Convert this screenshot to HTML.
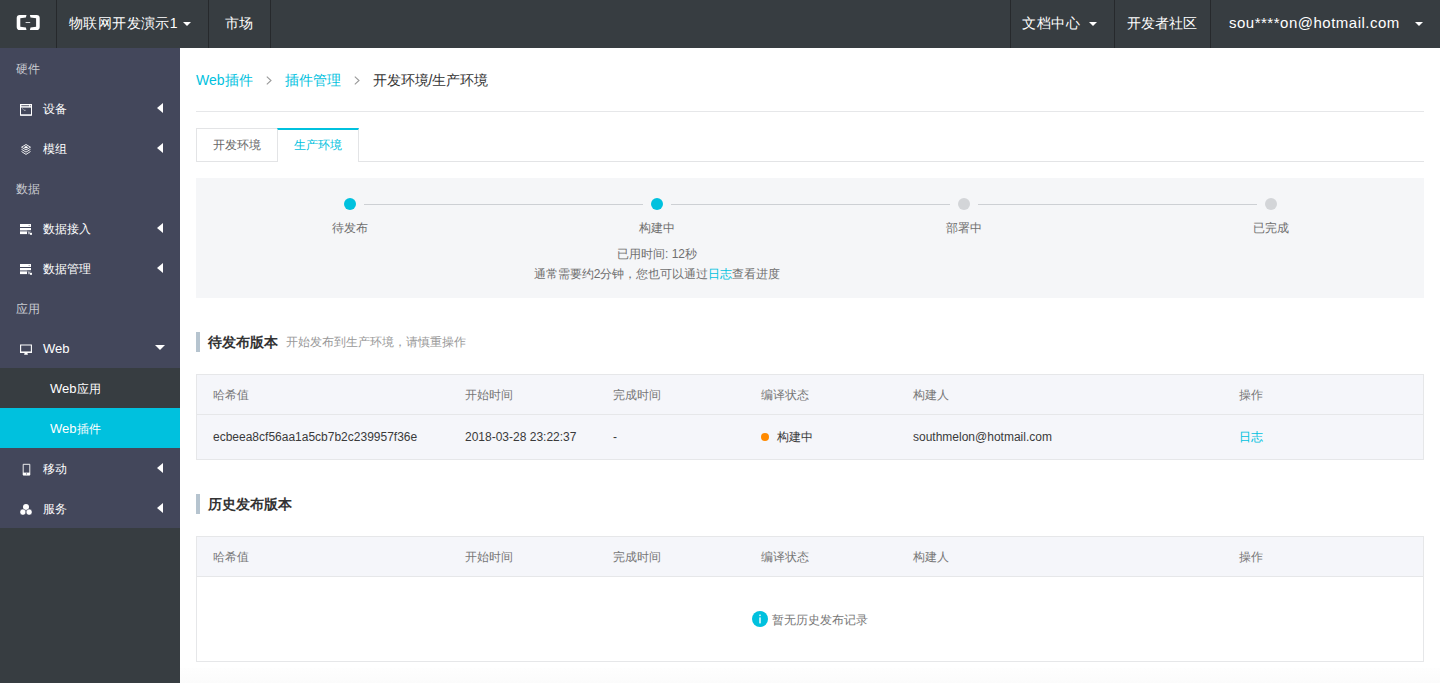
<!DOCTYPE html>
<html><head><meta charset="utf-8">
<style>
*{margin:0;padding:0;box-sizing:border-box}
html,body{width:1440px;height:683px;overflow:hidden;background:#fff;font-family:"Liberation Sans",sans-serif;font-size:12px;color:#333}
.ab{position:absolute}
.top{position:absolute;left:0;top:0;width:1440px;height:48px;background:#373d41;color:#fff}
.top .it{position:absolute;top:0;height:48px;line-height:47px;font-size:14px;color:#fff;white-space:nowrap}
.top .sep{position:absolute;top:0;width:1px;height:48px;background:#26292c}
.caret{position:absolute;top:22px;width:0;height:0;border-left:4px solid transparent;border-right:4px solid transparent;border-top:4px solid #fff}
.side{position:absolute;left:0;top:48px;width:180px;height:635px;background:#373d41}
.sbg{position:absolute;left:0;top:0;width:180px;height:480px;background:#43475b}
.lab{position:absolute;left:16px;height:40px;line-height:42px;font-size:12px;color:#c9cbd1}
.mi{position:absolute;left:0;width:180px;height:40px;line-height:42px;font-size:12px;color:#fff}
.mi .tx{position:absolute;left:43px;top:0;white-space:nowrap}
.mi svg{position:absolute}
.lc{position:absolute;left:157px;top:15px;width:0;height:0;border-top:5px solid transparent;border-bottom:5px solid transparent;border-right:6px solid #fff}
.main{position:absolute;left:180px;top:48px;width:1260px;height:635px}
.a{color:#00c1de}
.gt{display:inline-block;margin:0 13px 0 13px;vertical-align:0px}
.tab{position:absolute;top:80px;height:34px;line-height:33px;text-align:center;font-size:12px;background:#fff}
.steps{position:absolute;left:16px;top:130px;width:1228px;height:120px;background:#f5f6f8}
.steps .ln{position:absolute;top:26px;height:1px;background:#cdd0d4}
.steps .dot{position:absolute;top:20px;width:12px;height:12px;border-radius:50%;background:#d3d5d8}
.steps .dot.on{background:#00c1de}
.steps .sl{position:absolute;top:40px;width:200px;text-align:center;font-size:12px;color:#6f6f6f;line-height:20px}
.steps .sd{position:absolute;width:800px;text-align:center;font-size:12px;color:#6f6f6f;line-height:20px}
.st{position:absolute;left:16px;height:20px;border-left:4px solid #b6c4cf}
.st b{position:absolute;left:8px;top:0;line-height:21px;font-size:14px;color:#333;white-space:nowrap}
.st span{position:absolute;top:0;line-height:21px;font-size:12px;color:#999;white-space:nowrap}
.tbl{position:absolute;left:16px;width:1228px;border:1px solid #e6e7e9}
.th{position:relative;height:40px;background:#f5f6fa;border-bottom:1px solid #e6e7e9}
.th span{position:absolute;top:0;line-height:41px;font-size:12px;color:#777;white-space:nowrap}
.tr{position:relative;background:#f5f6fa}
.tr span{position:absolute;top:0;line-height:44px;font-size:12px;color:#3a3a3a;white-space:nowrap}
.tr span.a{color:#00c1de}
.od{display:inline-block;width:8px;height:8px;border-radius:50%;background:#ff8a00;margin-right:8px;vertical-align:middle;position:relative;top:-1px}
.empty{position:relative;height:84px;background:#fff}
</style></head><body>
<div class="top">
  <svg class="ab" style="left:16px;top:15px" width="25" height="15" viewBox="-0.7 0 25 15">
    <path fill="#fff" d="M9.8 0H3.1Q0 0 0 3.1V11.9Q0 15 3.1 15H9.8L9.2 12.6L3.6 11.7V3.3L9.2 2.4Z"/>
    <path fill="#fff" d="M13.2 0H19.9Q23 0 23 3.1V11.9Q23 15 19.9 15H13.2L13.8 12.6L19.4 11.7V3.3L13.8 2.4Z"/>
    <rect x="8.9" y="7" width="4.6" height="1" fill="#d5d7d9"/>
  </svg>
  <div class="sep" style="left:56px"></div>
  <div class="it" style="left:69px;letter-spacing:0.4px">物联网开发演示1</div><span class="caret" style="left:183px"></span>
  <div class="sep" style="left:208px"></div>
  <div class="it" style="left:225px">市场</div>
  <div class="sep" style="left:270px"></div>
  <div class="sep" style="left:1010px"></div>
  <div class="it" style="left:1022px;letter-spacing:0.5px">文档中心</div><span class="caret" style="left:1089px"></span>
  <div class="sep" style="left:1114px"></div>
  <div class="it" style="left:1127px">开发者社区</div>
  <div class="sep" style="left:1210px"></div>
  <div class="it" style="left:1229px;font-size:15px;letter-spacing:0.5px;line-height:45px">sou****on@hotmail.com</div>
  <span class="caret" style="left:1415px"></span>
</div>
<div class="side">
  <div class="sbg"></div>
  <div class="lab" style="top:0">硬件</div>
  <div class="mi" style="top:40px">
    <svg style="left:20px;top:16px" width="12" height="12" viewBox="0 0 12 12">
      <path d="M0.5 0.5H11.5V11.5H0.5Z" fill="none" stroke="#fff" stroke-width="1"/>
      <rect x="0" y="0" width="12" height="3.6" fill="#fff"/>
      <rect x="1.3" y="1.3" width="7.8" height="0.9" fill="#43475b"/>
      <rect x="9.9" y="1.3" width="0.9" height="0.9" fill="#43475b"/>
      <rect x="1" y="10" width="10" height="1.5" fill="#c8cad2"/>
      <path d="M2.3 4.6L3.5 5.5 M3.9 6.3H5.6" stroke="#d0d2d8" stroke-width="0.8"/>
    </svg>
    <span class="tx">设备</span><span class="lc"></span></div>
  <div class="mi" style="top:80px">
    <svg style="left:21px;top:16px" width="10" height="11" viewBox="0 0 10 11">
      <path d="M5 0.5L9.5 3.2L5 5.9L0.5 3.2Z" fill="none" stroke="#fff" stroke-width="0.9"/>
      <path d="M5 1.9L7.4 3.2L5 4.5L2.6 3.2Z" fill="#fff"/>
      <path d="M0.5 5.3L5 8.1L9.5 5.3 M0.5 7.5L5 10.4L9.5 7.5" fill="none" stroke="#fff" stroke-width="0.9"/>
    </svg>
    <span class="tx">模组</span><span class="lc"></span></div>
  <div class="lab" style="top:120px">数据</div>
  <div class="mi" style="top:160px">
    <svg style="left:20px;top:16px" width="12" height="11" viewBox="0 0 12 11">
      <rect x="0" y="0" width="11" height="3" fill="#fff"/>
      <rect x="8.6" y="1.1" width="1.2" height="0.8" fill="#8a8d99"/>
      <rect x="0" y="4" width="11" height="2.2" fill="#fff"/>
      <rect x="0" y="6.3" width="7" height="1.2" fill="#a9acb7"/>
      <rect x="0" y="7.5" width="7" height="2.6" fill="#fff"/>
      <path d="M7.9 6.8L9 10.2L10.1 7.2" fill="none" stroke="#e8e9ee" stroke-width="0.7"/>
      <rect x="10" y="8.8" width="2" height="2" fill="#fff"/>
    </svg>
    <span class="tx">数据接入</span><span class="lc"></span></div>
  <div class="mi" style="top:200px">
    <svg style="left:20px;top:16px" width="12" height="11" viewBox="0 0 12 11">
      <rect x="0" y="0" width="11" height="3" fill="#fff"/>
      <rect x="8.6" y="1.1" width="1.2" height="0.8" fill="#8a8d99"/>
      <rect x="0" y="4" width="11" height="2.2" fill="#fff"/>
      <rect x="0" y="6.3" width="7" height="1.2" fill="#a9acb7"/>
      <rect x="0" y="7.5" width="7" height="2.6" fill="#fff"/>
      <path d="M7.9 6.8L9 10.2L10.1 7.2" fill="none" stroke="#e8e9ee" stroke-width="0.7"/>
      <rect x="10" y="8.8" width="2" height="2" fill="#fff"/>
    </svg>
    <span class="tx">数据管理</span><span class="lc"></span></div>
  <div class="lab" style="top:240px">应用</div>
  <div class="mi" style="top:280px">
    <svg style="left:20px;top:16px" width="12" height="11" viewBox="0 0 12 11">
      <path d="M0.6 1H11.4V8.2H0.6Z" fill="none" stroke="#fff" stroke-width="1.1"/>
      <rect x="0" y="7.6" width="12" height="1.3" fill="#fff"/>
      <path d="M4.6 8.8H7.4L7.9 10.8H4.1Z" fill="#fff"/>
    </svg>
    <span class="tx" style="font-size:13px">Web</span>
    <span class="ab" style="left:155px;top:17px;width:0;height:0;border-left:5px solid transparent;border-right:5px solid transparent;border-top:5px solid #fff"></span>
  </div>
  <div class="mi" style="top:320px;background:#373d41"><span class="tx" style="left:50px"><span style="font-size:13px">Web</span>应用</span></div>
  <div class="mi" style="top:360px;background:#00c1de"><span class="tx" style="left:50px"><span style="font-size:13px">Web</span>插件</span></div>
  <div class="mi" style="top:400px">
    <svg style="left:22px;top:15px" width="9" height="13" viewBox="0 0 9 13">
      <path d="M1.2 1.3H7.8V12H1.2Z" fill="none" stroke="#fff" stroke-width="0.9"/>
      <rect x="1" y="9.6" width="7" height="2.6" fill="#fff"/>
      <rect x="4" y="10.4" width="1" height="1" fill="#6b6f80"/>
    </svg>
    <span class="tx">移动</span><span class="lc"></span></div>
  <div class="mi" style="top:440px">
    <svg style="left:20px;top:16px" width="12" height="11" viewBox="0 0 12 11">
      <circle cx="6" cy="3" r="3" fill="#fff"/>
      <circle cx="2.9" cy="8.1" r="3" fill="#fff" stroke="#43475b" stroke-width="0.5"/>
      <circle cx="9.1" cy="8.1" r="3" fill="#fff" stroke="#43475b" stroke-width="0.5"/>
    </svg>
    <span class="tx">服务</span><span class="lc"></span></div>
</div>
<div class="ab" style="left:180px;top:668px;width:1260px;height:15px;background:linear-gradient(#fefefe,#fbfbfb)"></div>
<div class="main">
  <div class="ab" style="left:16px;top:22px;height:20px;line-height:20px;font-size:14px;white-space:nowrap">
    <span class="a">Web插件</span><svg class="gt" width="6" height="9" viewBox="0 0 6 9"><path d="M0.8 0.6 L5 4.5 L0.8 8.4" fill="none" stroke="#999" stroke-width="1.1"/></svg><span class="a">插件管理</span><svg class="gt" width="6" height="9" viewBox="0 0 6 9"><path d="M0.8 0.6 L5 4.5 L0.8 8.4" fill="none" stroke="#999" stroke-width="1.1"/></svg><span style="color:#333">开发环境/生产环境</span>
  </div>
  <div class="ab" style="left:16px;top:63px;width:1228px;height:1px;background:#e6e7e9"></div>
  <div class="ab" style="left:16px;top:113px;width:1228px;height:1px;background:#e3e4e6"></div>
  <div class="tab" style="left:16px;width:82px;border:1px solid #e3e4e6;color:#666">开发环境</div>
  <div class="tab" style="left:97px;width:82px;border-top:2px solid #00c1de;border-right:1px solid #e3e4e6;border-left:1px solid #e3e4e6;color:#00c1de;height:34px;line-height:31px">生产环境</div>
  <div class="steps">
    <div class="ln" style="left:168px;width:279px"></div>
    <div class="ln" style="left:475px;width:279px"></div>
    <div class="ln" style="left:782px;width:279px"></div>
    <div class="dot on" style="left:148px"></div>
    <div class="dot on" style="left:455px"></div>
    <div class="dot" style="left:762px"></div>
    <div class="dot" style="left:1069px"></div>
    <div class="sl" style="left:54px">待发布</div>
    <div class="sl" style="left:361px">构建中</div>
    <div class="sl" style="left:668px">部署中</div>
    <div class="sl" style="left:975px">已完成</div>
    <div class="sd" style="left:61px;top:66px">已用时间: 12秒</div>
    <div class="sd" style="left:61px;top:86px">通常需要约2分钟，您也可以通过<span class="a">日志</span>查看进度</div>
  </div>
  <div class="st" style="top:284px"><b>待发布版本</b><span style="left:86px">开始发布到生产环境，请慎重操作</span></div>
  <div class="tbl" style="top:326px;height:86px">
    <div class="th"><span style="left:16px">哈希值</span><span style="left:268px">开始时间</span><span style="left:416px">完成时间</span><span style="left:564px">编译状态</span><span style="left:716px">构建人</span><span style="left:1042px">操作</span></div>
    <div class="tr" style="height:44px"><span style="left:16px">ecbeea8cf56aa1a5cb7b2c239957f36e</span><span style="left:268px">2018-03-28 23:22:37</span><span style="left:416px">-</span><span style="left:564px"><i class="od"></i>构建中</span><span style="left:716px">southmelon@hotmail.com</span><span class="a" style="left:1042px">日志</span></div>
  </div>
  <div class="st" style="top:446px"><b>历史发布版本</b></div>
  <div class="tbl" style="top:488px;height:126px">
    <div class="th"><span style="left:16px">哈希值</span><span style="left:268px">开始时间</span><span style="left:416px">完成时间</span><span style="left:564px">编译状态</span><span style="left:716px">构建人</span><span style="left:1042px">操作</span></div>
    <div class="empty">
      <svg class="ab" style="left:555px;top:34px" width="16" height="16" viewBox="0 0 16 16"><circle cx="8" cy="8" r="8" fill="#00c1de"/><rect x="7.3" y="3.6" width="1.4" height="1.5" fill="#fff"/><rect x="7.3" y="6.4" width="1.4" height="6" fill="#fff"/></svg>
      <span class="ab" style="left:575px;top:33px;line-height:20px;font-size:12px;color:#777">暂无历史发布记录</span>
    </div>
  </div>
</div>
</body></html>
